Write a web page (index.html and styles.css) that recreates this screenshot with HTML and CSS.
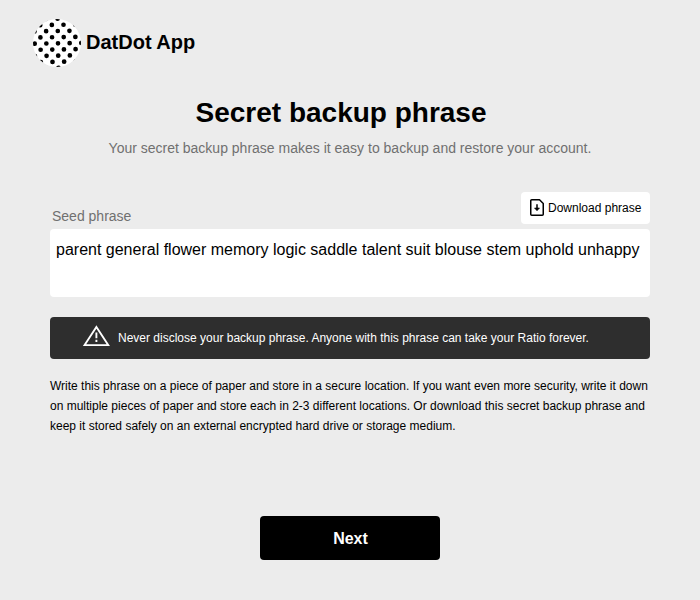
FILE: index.html
```html
<!DOCTYPE html>
<html lang="en">
<head>
<meta charset="utf-8">
<title>DatDot App</title>
<link rel="stylesheet" href="styles.css">
</head>
<body>
<header class="brand">
  <svg class="logo" width="50" height="50" viewBox="32 18 50 50" aria-hidden="true">
    <clipPath id="disc"><circle cx="57" cy="43" r="24"/></clipPath>
    <circle cx="57" cy="43" r="24" fill="#fff"/>
    <g clip-path="url(#disc)">
      <path transform="rotate(-1 58 43.3)" fill="none" stroke="#000" stroke-width="4.7" stroke-linecap="round" stroke-dasharray="0 11.65" d="M34.7 18.7h60M28.87 24.85h60M34.7 31h60M28.87 37.15h60M34.7 43.3h60M28.87 49.45h60M34.7 55.6h60M28.87 61.75h60M34.7 67.9h60"/>
    </g>
  </svg>
  <span class="brand-name">DatDot App</span>
</header>
<main class="content">
  <h1 class="title">Secret backup phrase</h1>
  <p class="subtitle">Your secret backup phrase makes it easy to backup and restore your account.</p>
  <div class="field-head">
    <label class="label">Seed phrase</label>
    <button class="download">
      <svg class="file-icon" width="14" height="17" viewBox="0 0 14 17" fill="none" stroke="#000" stroke-width="1.5" stroke-linejoin="round" aria-hidden="true">
        <path d="M1.75.75H9.5L13.25 4.5V15.25a1 1 0 0 1-1 1H1.75a1 1 0 0 1-1-1V1.75a1 1 0 0 1 1-1Z"/>
        <path d="M7 5.2V9.5"/>
        <path d="M4.5 9H9.5L7 11.8Z" fill="#000" stroke-width=".6"/>
      </svg>
      <span>Download phrase</span>
    </button>
  </div>
  <div class="seed">parent general flower memory logic saddle talent suit blouse stem uphold unhappy</div>
  <div class="warning">
    <svg width="28" height="22" viewBox="0 0 28 22" fill="none" stroke="#fff" aria-hidden="true">
      <path d="M14.4 1.9 26.2 20.1H2.6Z" stroke-width="1.9"/>
      <path d="M14.4 7.5V13.2M14.4 14.8V17" stroke-width="1.9"/>
    </svg>
    <span>Never disclose your backup phrase. Anyone with this phrase can take your Ratio forever.</span>
  </div>
  <p class="help">Write this phrase on a piece of paper and store in a secure location. If you want even more security, write it down<br>on multiple pieces of paper and store each in 2-3 different locations. Or download this secret backup phrase and<br>keep it stored safely on an external encrypted hard drive or storage medium.</p>
  <button class="next">Next</button>
</main>
</body>
</html>
```
FILE: styles.css
```css
* { box-sizing: border-box; }
body {
  margin: 0;
  height: 600px;
  background: #ececec;
  color: #000;
  font-family: "Liberation Sans", Arial, sans-serif;
  overflow: hidden;
}
button { border: 0; font-family: inherit; }
.brand { display: flex; align-items: center; height: 68px; padding: 18px 0 0 32px; gap: 4px; }
.logo { flex: none; }
.brand-name { padding-bottom: 2px; font-size: 20px; font-weight: 700; line-height: 24px; white-space: nowrap; }
.content { width: 600px; margin: 0 auto; }
.title { margin: 29px 18px 0 0; font-size: 28px; line-height: 32px; text-align: center; white-space: nowrap; }
.subtitle { margin: 9px 0 0; font-size: 14px; line-height: 20px; color: #707070; text-align: center; white-space: nowrap; }
.field-head { display: flex; justify-content: space-between; align-items: flex-end; height: 32px; margin-top: 34px; }
.label { padding-left: 2px; font-size: 14px; line-height: 16px; color: #707070; }
.download { display: flex; align-items: center; gap: 4px; width: 129px; height: 32px; padding: 0 0 0 9px; border-radius: 4px; background: #fff; color: #000; font-size: 12px; white-space: nowrap; }
.file-icon { margin-bottom: 1px; }
.seed { height: 68px; margin-top: 5px; padding: 11px 6px; border-radius: 4px; background: #fff; font-size: 16px; line-height: 20px; white-space: nowrap; }
.warning { display: flex; align-items: flex-start; gap: 8px; height: 42px; margin-top: 20px; padding: 8px 0 0 32px; border-radius: 4px; background: #2e2e2e; color: #fff; font-size: 12px; line-height: 26px; white-space: nowrap; }
.help { margin: 17px 0 0; font-size: 12px; line-height: 20px; white-space: nowrap; }
.next { display: block; width: 180px; height: 44px; margin: 80px auto 0; padding: 2px 0 0 1px; border-radius: 4px; background: #000; color: #fff; font-size: 16px; font-weight: 700; }
```
